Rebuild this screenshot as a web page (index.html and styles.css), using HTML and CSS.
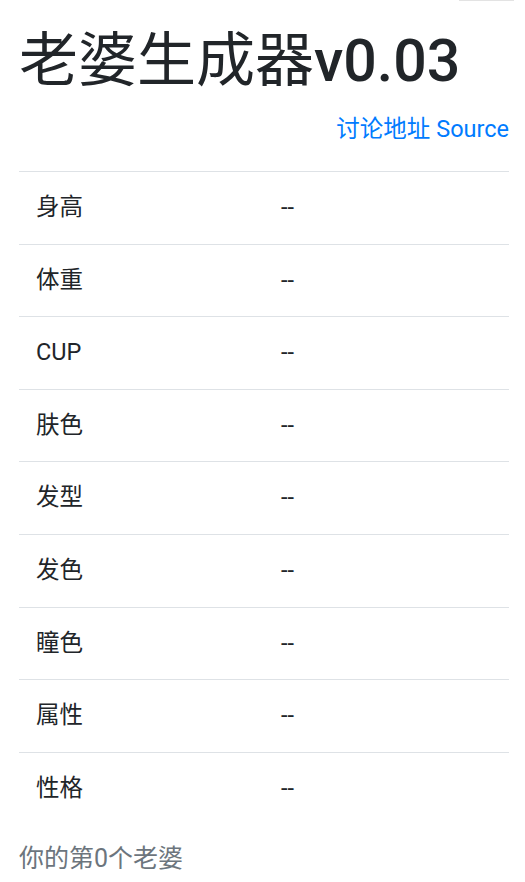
FILE: index.html
```html
<!DOCTYPE html>
<html lang="zh-CN">
<head>
<meta charset="utf-8">
<title>老婆生成器</title>
<link rel="stylesheet" href="styles.css">
</head>
<body>
<div class="topline"></div>
<div class="container">
  <h1 class="title">老婆生成器<span class="ver">v0.03</span></h1>
  <p class="links"><a href="#" class="link">讨论地址</a> <a href="#" class="link">Source</a></p>
  <table class="attrs">
    <tbody>
      <tr><td class="key">身高</td><td class="val">--</td></tr>
      <tr><td class="key">体重</td><td class="val">--</td></tr>
      <tr><td class="key">CUP</td><td class="val">--</td></tr>
      <tr><td class="key">肤色</td><td class="val">--</td></tr>
      <tr><td class="key">发型</td><td class="val">--</td></tr>
      <tr><td class="key">发色</td><td class="val">--</td></tr>
      <tr><td class="key">瞳色</td><td class="val">--</td></tr>
      <tr><td class="key">属性</td><td class="val">--</td></tr>
      <tr><td class="key">性格</td><td class="val">--</td></tr>
    </tbody>
  </table>
  <p class="count">你的第0个老婆</p>
</div>
</body>
</html>
```
FILE: styles.css
```css
html, body {
  margin: 0;
  padding: 0;
  background: #fff;
}
body {
  font-family: Roboto, "Noto Sans CJK SC", sans-serif;
  color: #212529;
  font-size: 23.5px;
  line-height: 1.5;
  position: relative;
}
.topline {
  position: absolute;
  top: 0;
  right: 11px;
  width: 55px;
  height: 1px;
  background: #e3e3e3;
}
.container {
  padding: 26px 16px 0 19px;
}
.title {
  margin: 0 0 15px;
  font-size: 59px;
  line-height: 1.2;
  font-weight: 400;
}
.ver {
  font-weight: 500;
}
.links {
  margin: 0 0 24px;
  text-align: right;
}
.link {
  color: #007bff;
  text-decoration: none;
}
.attrs {
  width: 100%;
  border-collapse: collapse;
}
.attrs td {
  border-top: 1px solid #dee2e6;
  padding: 18px 17px;
  line-height: 35.6px;
  width: 50%;
  vertical-align: top;
}
.count {
  margin: 16px 0 0;
  color: #6c757d;
  font-size: 25px;
}
```
